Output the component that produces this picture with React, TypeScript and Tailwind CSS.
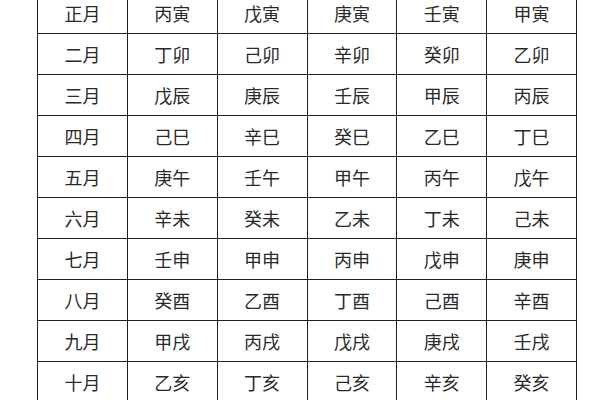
import React from "react";

const rows: string[][] = [
  ["正月", "丙寅", "戊寅", "庚寅", "壬寅", "甲寅"],
  ["二月", "丁卯", "己卯", "辛卯", "癸卯", "乙卯"],
  ["三月", "戊辰", "庚辰", "壬辰", "甲辰", "丙辰"],
  ["四月", "己巳", "辛巳", "癸巳", "乙巳", "丁巳"],
  ["五月", "庚午", "壬午", "甲午", "丙午", "戊午"],
  ["六月", "辛未", "癸未", "乙未", "丁未", "己未"],
  ["七月", "壬申", "甲申", "丙申", "戊申", "庚申"],
  ["八月", "癸酉", "乙酉", "丁酉", "己酉", "辛酉"],
  ["九月", "甲戌", "丙戌", "戊戌", "庚戌", "壬戌"],
  ["十月", "乙亥", "丁亥", "己亥", "辛亥", "癸亥"],
];

const App = () => {
  return (
    <div className="w-[600px] h-[400px] overflow-hidden bg-white">
      <div className="ml-[37px] mt-[-8px] w-[540px] grid grid-cols-6 border-l border-t border-[#1f1f1f] font-['Noto_Sans_CJK_SC',sans-serif] text-[18px] text-[#2a2a2a]">
        {rows.map((row, i) =>
          row.map((cell, j) => (
            <div
              key={`${i}-${j}`}
              className="h-[41px] flex items-center justify-center border-r border-b border-[#1f1f1f]"
            >
              {cell}
            </div>
          ))
        )}
      </div>
    </div>
  );
};

export default App;
